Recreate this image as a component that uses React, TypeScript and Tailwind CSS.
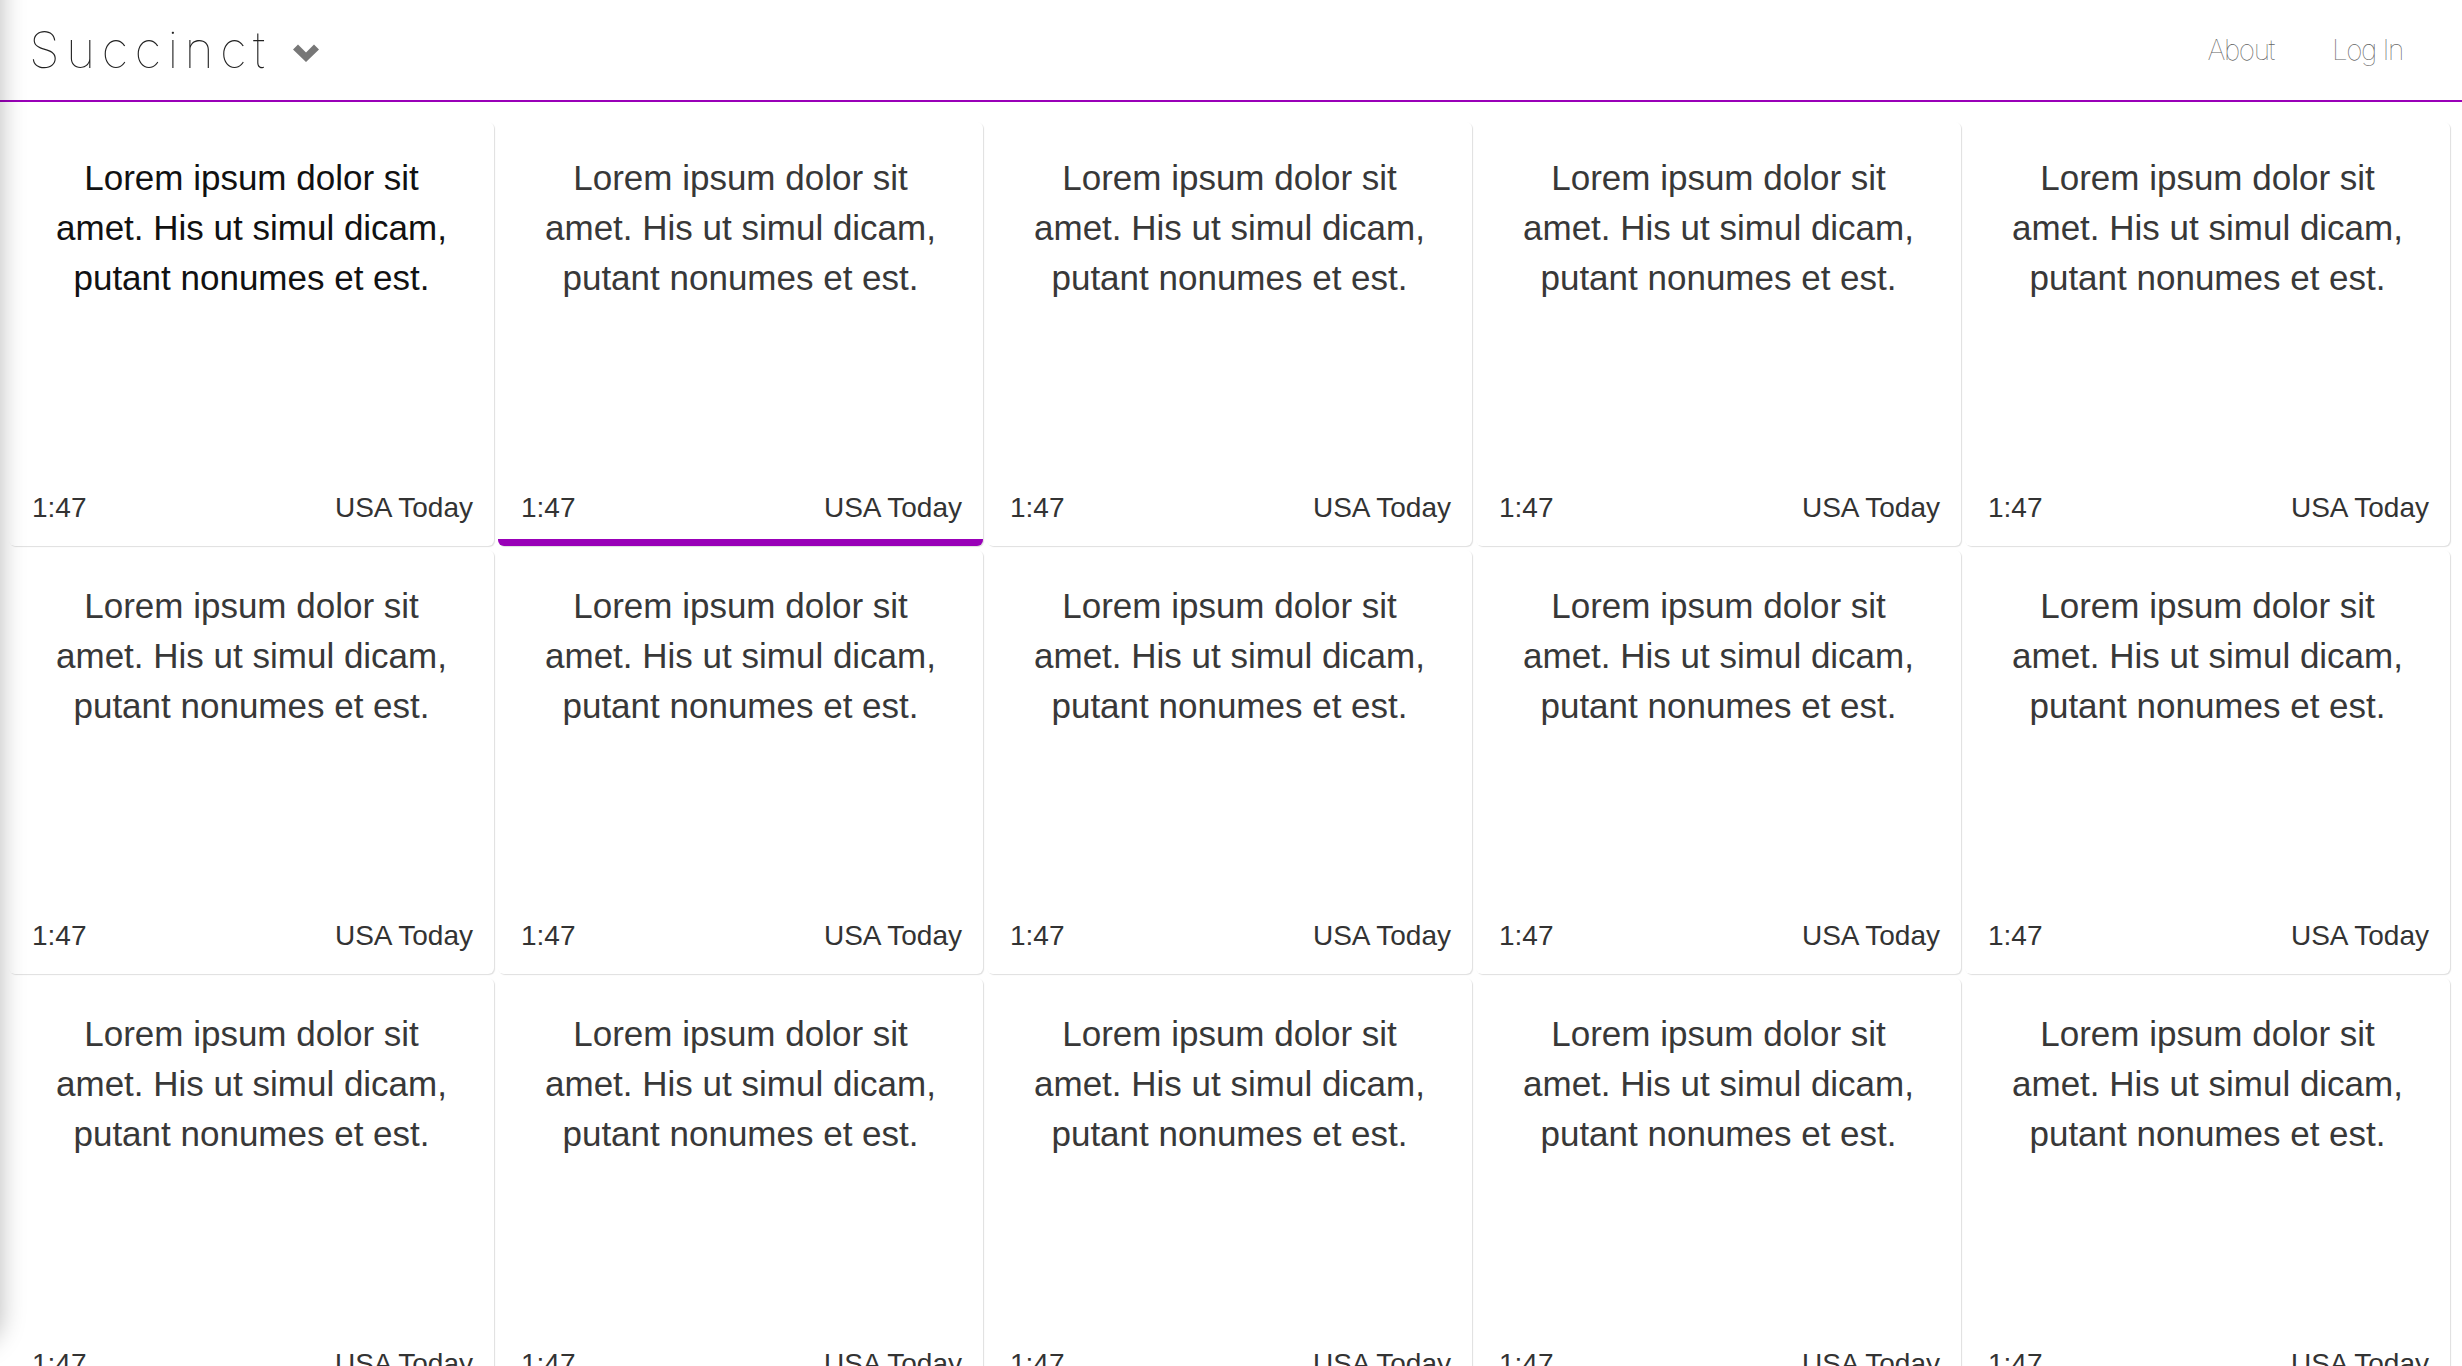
import React from "react";

type Story = { id: number; title: string[]; time: string; source: string };

const lines = ["Lorem ipsum dolor sit", "amet. His ut simul dicam,", "putant nonumes et est."];

const stories: Story[] = Array.from({ length: 15 }, (_, i) => ({
  id: i,
  title: lines,
  time: "1:47",
  source: "USA Today",
}));

function Chevron() {
  return (
    <svg width="26" height="18" viewBox="0 0 26 18" className="mt-[6px]">
      <path d="M0 5.5 L5 0.5 L13 8.5 L21 0.5 L26 5.5 L13 18 Z" fill="#777" />
    </svg>
  );
}

function StoryCard({ story, active, dark }: { story: Story; active?: boolean; dark?: boolean }) {
  return (
    <div
      className={`flex flex-col justify-between bg-white rounded-md shadow-[1px_1px_1px_rgba(0,0,0,0.13)] ${
        active ? "border-b-[7px] border-[#9900b8] pb-[15px]" : "pb-[22px]"
      }`}
    >
      <p
        className={`pt-[31px] text-center text-[35px] leading-[50px] ${
          dark ? "text-[#111]" : "text-[#383838]"
        }`}
      >
        {story.title.map((l) => (
          <span key={l} className="block">
            {l}
          </span>
        ))}
      </p>
      <div className="flex justify-between pl-[23px] pr-[21px] text-[28px] leading-[32px] text-[#333]">
        <span>{story.time}</span>
        <span>{story.source}</span>
      </div>
    </div>
  );
}

export default function App() {
  return (
    <div
      className="relative h-[1366px] overflow-hidden bg-white"
      style={{ fontFamily: '"Liberation Sans", Arial, sans-serif' }}
    >
      <header className="flex h-[102px] items-center justify-between border-b-2 border-[#9900b8] pl-[29px] pr-[59px]">
        <div className="flex items-center gap-[22px]">
          <span className="font-['Inter',sans-serif] text-[50px] font-thin tracking-[6.3px] text-[#222]">
            Succinct
          </span>
          <Chevron />
        </div>
        <nav className="flex items-center gap-[58px] font-['Inter',sans-serif] text-[28px] font-thin tracking-[-1.4px] text-[#666]">
          <a href="#">About</a>
          <a href="#">Log In</a>
        </nav>
      </header>

      <main className="grid grid-cols-5 auto-rows-[424px] gap-1 pl-[9px] pr-[12px] pt-5">
        {stories.map((s) => (
          <StoryCard key={s.id} story={s} active={s.id === 1} dark={s.id === 0} />
        ))}
      </main>

      {/* shadow of the hidden side panel */}
      <div className="pointer-events-none absolute left-[-40px] top-[-40px] h-[1385px] w-[40px] rounded-br-[28px] bg-white shadow-[0_0_26px_rgba(0,0,0,0.28)]" />
    </div>
  );
}
